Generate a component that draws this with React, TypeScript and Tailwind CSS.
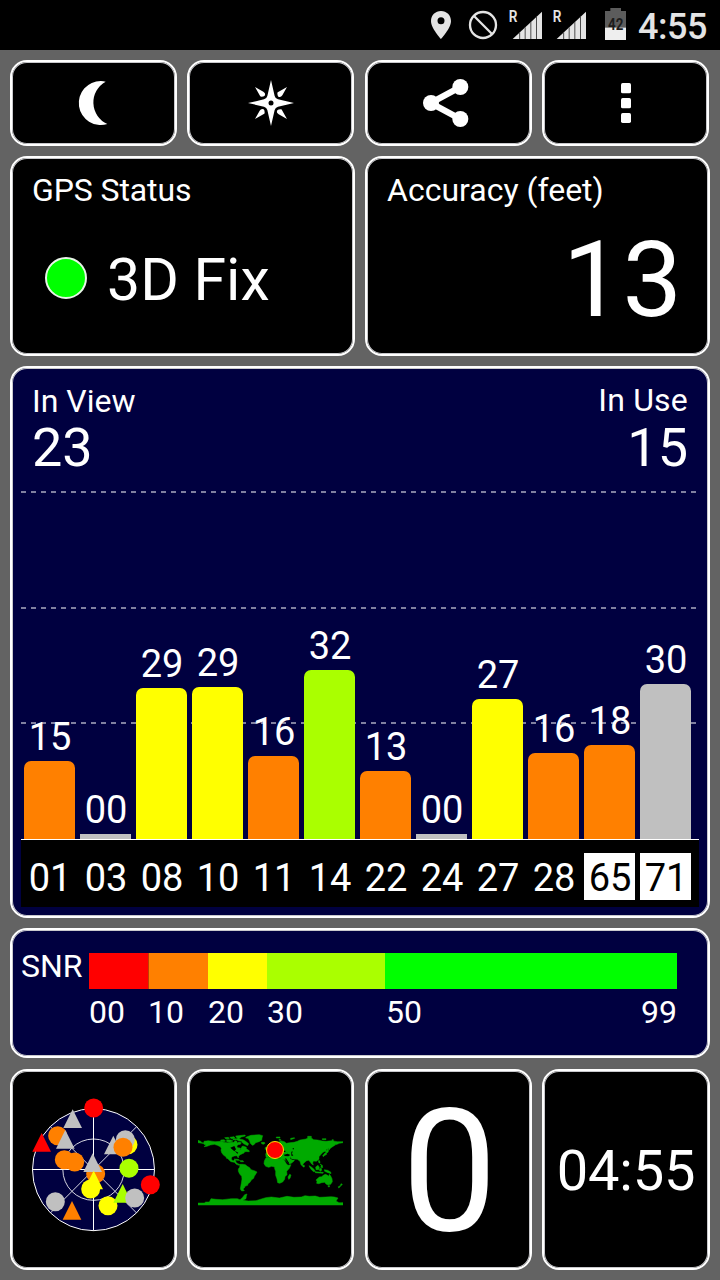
import type { ReactNode } from "react";

const COLORS = {
  red: "#ff0000",
  orange: "#ff8000",
  yellow: "#ffff00",
  lime: "#aaff00",
  gray: "#c0c0c0",
};

type Color = keyof typeof COLORS;

const FILL: Record<Color, string> = {
  red: "bg-[#ff0000]",
  orange: "bg-[#ff8000]",
  yellow: "bg-[#ffff00]",
  lime: "bg-[#aaff00]",
  gray: "bg-[#c0c0c0]",
};

interface Satellite {
  id: string;
  snr: string;
  height: number;
  color: Color;
  glonass?: boolean;
}

const SATELLITES: Satellite[] = [
  { id: "01", snr: "15", height: 78, color: "orange" },
  { id: "03", snr: "00", height: 5, color: "gray" },
  { id: "08", snr: "29", height: 151, color: "yellow" },
  { id: "10", snr: "29", height: 152, color: "yellow" },
  { id: "11", snr: "16", height: 83, color: "orange" },
  { id: "14", snr: "32", height: 169, color: "lime" },
  { id: "22", snr: "13", height: 68, color: "orange" },
  { id: "24", snr: "00", height: 5, color: "gray" },
  { id: "27", snr: "27", height: 140, color: "yellow" },
  { id: "28", snr: "16", height: 86, color: "orange" },
  { id: "65", snr: "18", height: 94, color: "orange", glonass: true },
  { id: "71", snr: "30", height: 155, color: "gray", glonass: true },
];

function Card({ className, children }: { className: string; children: ReactNode }) {
  return (
    <div
      className={`shrink-0 rounded-[17px] border-2 border-white shadow-[inset_0_0_0_1px_#c8c8cc] ${className}`}
    >
      {children}
    </div>
  );
}

function Signal() {
  return (
    <svg className="h-8 w-[35px] overflow-visible" viewBox="264 27 105 96">
      <text x="266" y="67" fill="#e4e4e4" fontFamily="Roboto" fontWeight="600" fontSize="50" textLength="26" lengthAdjust="spacingAndGlyphs">
        R
      </text>
      <path d="M278 117 366 35V117Z" fill="#e4e4e4" />
      <path d="M299 97V117M315.500 82V117M332.500 66V117M349.500 50V117" stroke="#4c4c4c" strokeWidth="3" />
    </svg>
  );
}

function StatusBar() {
  return (
    <header className="flex h-[50px] shrink-0 items-center bg-black pl-[430px] text-[#e4e4e4]">
      <svg className="h-[30px] w-[22px]" viewBox="30 30 66 90">
        <path
          fillRule="evenodd"
          fill="#e4e4e4"
          d="M63 33C46 33 33 46 33 63C33 85 63 117 63 117S93 85 93 63C93 46 80 33 63 33ZM63 52A10.500 10.500 0 1 1 63 73A10.500 10.500 0 1 1 63 52Z"
        />
      </svg>
      <svg className="ml-4 h-[30px] w-[30px]" viewBox="144 30 90 90">
        <circle cx="189" cy="75" r="39" fill="none" stroke="#e4e4e4" strokeWidth="7" />
        <path d="M162 48 216 102" stroke="#e4e4e4" strokeWidth="7" />
      </svg>
      <div className="ml-2.5 flex gap-[9px]">
        <Signal />
        <Signal />
      </div>
      <svg className="ml-[17px] h-[34px] w-[23px]" viewBox="552 24 69 102">
        <path d="M571 24H603V33H618V84H555V33H571Z" fill="#5c5c5c" />
        <path d="M555 83H618V120H555Z" fill="#eeeeee" />
        <text x="564" y="90" fill="#1c1c1c" fontFamily="Roboto" fontWeight="700" fontSize="48" textLength="46" lengthAdjust="spacingAndGlyphs">
          42
        </text>
      </svg>
      <span className="ml-[11px] pt-1 text-[36px] leading-none font-medium tracking-[-0.5px]">4:55</span>
    </header>
  );
}

function Toolbar() {
  const button = "h-[86px] w-[167px] bg-black";
  return (
    <div className="flex">
      <Card className={button}>
        <svg className="h-full w-full" viewBox="36 36 489 246">
          <path d="M317 95Q310 93 303 93A66 66 0 1 0 322 222A71 71 0 0 1 317 95Z" fill="#fff" />
        </svg>
      </Card>
      <Card className={`ml-2.5 ${button}`}>
        <svg className="h-full w-full" viewBox="567 36 489 246">
          <path
            d="M813 90 824 138Q826 146 834 148L882 159 834 170Q826 172 824 180L813 228 802 180Q800 172 792 170L744 159 792 148Q800 146 802 138Z"
            fill="#fff"
          />
          {[0, 90, 180, 270].map((angle) => (
            <path
              key={angle}
              transform={`rotate(${angle} 813 159)`}
              d="M765 111 790 125Q798 130 794 137Q791 140 784 140Q780 140 779 136Z"
              fill="#fff"
            />
          ))}
          <circle cx="813" cy="159" r="7.500" fill="#000" />
        </svg>
      </Card>
      <Card className={`ml-[11px] ${button}`}>
        <svg className="h-full w-full" viewBox="21 36 489 246">
          <path d="M301 111 212 159 301 207" fill="none" stroke="#fff" strokeWidth="19" />
          <circle cx="213" cy="159" r="24" fill="#fff" />
          <circle cx="301" cy="111" r="24" fill="#fff" />
          <circle cx="301" cy="207" r="24" fill="#fff" />
        </svg>
      </Card>
      <Card className={`ml-2.5 ${button}`}>
        <svg className="h-full w-full" viewBox="552 36 489 246" fill="#fff">
          <rect x="783" y="99" width="30" height="31" rx="5" />
          <rect x="783" y="144" width="30" height="31" rx="5" />
          <rect x="783" y="189" width="30" height="30" rx="5" />
        </svg>
      </Card>
    </div>
  );
}

function StatusCards() {
  return (
    <div className="mt-2.5 flex gap-2.5">
      <Card className="h-[200px] w-[345px] bg-black pt-4 pl-5">
        <div className="text-[32px] leading-none tracking-[-0.1px]">GPS Status</div>
        <div className="mt-[40px] flex items-center pl-[13px]">
          <div className="h-[42px] w-[42px] rounded-full border-2 border-[#e8f4e8] bg-[#00ff00]" />
          <span className="ml-5 pt-1 text-[59px] leading-none">3D Fix</span>
        </div>
      </Card>
      <Card className="h-[200px] w-[345px] bg-black pt-4 pr-[26px] pl-5">
        <div className="text-[32px] leading-none">Accuracy (feet)</div>
        <div className="mt-[21px] text-right text-[106px] leading-none">13</div>
      </Card>
    </div>
  );
}

function GridLine({ className }: { className: string }) {
  return (
    <div
      className={`h-0.5 w-[676px] bg-[repeating-linear-gradient(to_right,#8080a0_0_5px,transparent_5px_10px)] ${className}`}
    />
  );
}

function SatelliteChart() {
  return (
    <Card className="mt-2.5 h-[552px] w-[700px] bg-[#000040] px-[9px]">
      <div className="flex h-[123px] justify-between px-[11px]">
        <div className="pt-[17px]">
          <div className="text-[32px] leading-none">In View</div>
          <div className="mt-[4px] text-[54px] leading-none">23</div>
        </div>
        <div className="pt-4 text-right">
          <div className="text-[32px] leading-none tracking-[0.2px]">In Use</div>
          <div className="mt-[5px] text-[54px] leading-none">15</div>
        </div>
      </div>
      <div className="relative h-[348px]">
        <div className="absolute inset-0">
          <GridLine className="" />
          <GridLine className="mt-[114px]" />
          <GridLine className="mt-[113px]" />
        </div>
        <div className="relative flex h-full gap-[5px] pl-[3px]">
          {SATELLITES.map((s) => (
            <div key={s.id} className="flex w-[51px] shrink-0 flex-col justify-end">
              <span className="mb-[5px] pl-px text-center text-[38px] leading-none">{s.snr}</span>
              <div
                className={`${s.height > 10 ? "rounded-t-[7px]" : ""} ${FILL[s.color]}`}
                style={{ height: s.height }}
              />
            </div>
          ))}
        </div>
      </div>
      <div className="flex h-[68px] w-[678px] gap-[5px] border-t border-white bg-black pt-[13px] pl-[3px]">
        {SATELLITES.map((s) => (
          <div
            key={s.id}
            className={`h-[47px] w-[51px] shrink-0 pt-1.5 pl-px text-center text-[38px] leading-none ${
              s.glonass ? "bg-white text-black" : ""
            }`}
          >
            {s.id}
          </div>
        ))}
      </div>
    </Card>
  );
}

function SnrScale() {
  const label = "mt-[7px] text-[32px] leading-none";
  return (
    <Card className="mt-2.5 flex h-[130px] w-[700px] bg-[#000040] pt-[23px] pl-[9px]">
      <div className="w-[68px] shrink-0 text-[32px] leading-none">
        <div className="-mt-[3px]">SNR</div>
      </div>
      <div className="flex">
        <div className="w-[59px]">
          <div className="h-9 bg-[#ff0000]" />
          <div className={label}>00</div>
        </div>
        <div className="w-[60px]">
          <div className="h-9 border-l border-[#bf4000] bg-[#ff8000]" />
          <div className={label}>10</div>
        </div>
        <div className="w-[59px]">
          <div className="h-9 bg-[#ffff00]" />
          <div className={label}>20</div>
        </div>
        <div className="w-[118px]">
          <div className="h-9 bg-[#aaff00]" />
          <div className={label}>30</div>
        </div>
        <div className="w-[292px]">
          <div className="mr-[0.500px] h-9 bg-[#00ff00]" />
          <div className={`flex justify-between pl-px ${label}`}>
            <span>50</span>
            <span>99</span>
          </div>
        </div>
      </div>
    </Card>
  );
}

type Marker = ["dot" | "tri", number, number, Color];

/* Triangles are positioned by their apex, dots by their centre. */
const MARKERS: Marker[] = [
  ["dot", 251, 114, "red"],
  ["tri", 188, 118, "gray"],
  ["dot", 143, 197, "orange"],
  ["tri", 95, 189, "red"],
  ["tri", 166, 180, "gray"],
  ["dot", 354, 224, "yellow"],
  ["tri", 310, 197, "gray"],
  ["dot", 346, 209, "gray"],
  ["dot", 339, 232, "orange"],
  ["dot", 163, 269, "orange"],
  ["dot", 194, 276, "orange"],
  ["dot", 257, 311, "orange"],
  ["tri", 248, 250, "gray"],
  ["tri", 251, 302, "yellow"],
  ["dot", 242, 357, "yellow"],
  ["dot", 357, 295, "lime"],
  ["dot", 421, 344, "red"],
  ["dot", 136, 395, "gray"],
  ["tri", 186, 393, "orange"],
  ["dot", 294, 407, "yellow"],
  ["tri", 338, 342, "lime"],
  ["dot", 374, 384, "gray"],
];

function SkyPlot() {
  return (
    <svg className="mt-[26px] ml-[18px] h-[137px] w-[132px]" viewBox="60 81 396 411">
      <circle cx="250.500" cy="299" r="183" fill="#000040" stroke="#fff" strokeWidth="3" />
      <circle cx="250.500" cy="299" r="92" fill="none" stroke="#fff" strokeWidth="2.500" />
      <path d="M250.500 116V482M67 298.500H433" stroke="#fff" strokeWidth="3" />
      <path d="M121 170 380 429M380 170 121 429" stroke="#fff" strokeWidth="2.500" />
      {MARKERS.map(([kind, x, y, color], i) =>
        kind === "dot" ? (
          <circle key={i} cx={x} cy={y} r="28.500" fill={COLORS[color]} />
        ) : (
          <path key={i} d={`M${x} ${y}l28 56h-56z`} fill={COLORS[color]} />
        ),
      )}
    </svg>
  );
}

const LAND = [
  "M39 61L47 64 51 68 57 68 57 64 70 62 90 65 108 64 116 67 127 68 138 67 147 67 150 62 156 64 156 69 162 66 169 68 166 73 160 74 155 78 158 83 165 84 165 90 169 88 170 81 173 78 180 80 184 82 184 86 191 91 184 95 179 95 177 99 172 101 166 104 161 108 160 114 155 107 148 108 142 110 139 114 140 120 145 122 150 118 152 123 154 128 159 131 165 134 162 136 154 133 148 127 138 125 133 121 126 113 127 117 121 109 116 106 110 98 108 91 109 85 106 80 97 76 88 73 76 75 66 79 57 80 63 75 57 73 57 71 51 70 39 68Z",
  "M107 60L117 59 122 63 117 65 108 64ZM119 53L130 52 133 56 122 56ZM134 52L147 50 150 54 139 56ZM125 59L137 60 144 63 135 66 125 65ZM143 56L155 56 160 53 164 57 174 59 182 64 191 71 188 77 179 73 173 69 170 64 160 62 155 59 145 60ZM152 48L180 45 181 48 169 51 164 55 155 53Z",
  "M184 51L198 46 223 44 233 47 231 54 230 61 222 65 212 68 207 74 202 76 196 70 194 63 189 55 182 54ZM229 67L238 67 240 70 235 73 230 71ZM166 85H173V88H166ZM186 92L192 91 193 95 187 95Z",
  "M148 117L159 118 164 121 155 121ZM165 122L174 122 176 125 167 125Z",
  "M165 133L173 133 181 134 187 139 194 143 198 149 208 152 216 156 213 161 208 169 206 175 199 180 195 187 189 191 188 196 180 199 178 204 174 207 178 212 170 213 166 207 167 200 169 190 171 177 170 169 164 162 160 154 160 147 164 142Z",
  "M243 111L242 101 248 96 254 100 258 94 253 91 263 86 267 79 275 77 277 70 288 62 298 65 304 70 314 68 327 67 337 64 345 60 363 57 370 53 379 54 386 59 398 60 412 63 423 64 440 62 457 65 474 65 474 68 463 70 456 73 446 76 436 77 431 84 423 89 427 95 425 99 420 94 414 97 407 104 402 110 402 118 394 124 385 123 383 129 385 135 379 131 376 126 371 121 365 122 360 126 354 132 353 139 348 134 345 124 337 118 326 117 328 122 320 129 313 132 306 124 300 119 293 118 287 116 277 114 268 111 260 108 255 112 246 112Z",
  "M243 113L256 112 268 110 272 115 280 117 291 116 298 121 304 131 309 136 318 134 313 145 305 154 306 164 300 170 299 178 293 186 284 190 278 188 276 177 272 166 272 154 269 146 269 141 260 139 251 142 242 139 237 131 238 123ZM314 163L318 165 315 175 311 178 309 171Z",
  "M247 75L252 78 256 88 249 90 250 84ZM241 82H246V88H240Z",
  "M274 51H285V54H274ZM282 58H287V61H282ZM317 55L328 53 329 55 317 59ZM368 49H379V53H368ZM412 56H423V59H412ZM441 59H445V62H441Z",
  "M419 100L424 97 425 103 418 107 415 110 413 107ZM428 84L431 92 428 98 425 96ZM400 122L404 122 405 129 402 129ZM405 132L412 136 413 143 407 142 409 137ZM372 137L379 141 387 148 391 154 386 155 380 150 375 143ZM392 141L399 136 403 142 401 149 393 149ZM404 146L409 145 410 151 406 154 403 151ZM390 155L402 156 415 157 414 160 391 158ZM418 149L428 151 437 156 438 161 429 158 424 156 419 154ZM434 71L440 74 444 72 449 76 443 80 437 84 432 90 430 83ZM354 136H358V141H354Z",
  "M397 176L403 171 410 170 415 166 421 163 428 166 431 169 433 163 437 168 441 176 442 185 437 193 429 195 423 192 419 187 410 188 401 191 395 190 396 184 393 180ZM429 197L434 197 433 201 430 201ZM468 191L472 193 470 196 466 197ZM460 200L466 197 466 200 461 204Z",
  "M39 249H58L62 246H73L78 236 93 238 113 239 139 236 157 236 165 239 172 233 179 224 186 222 184 228 183 236 173 241 190 243 213 242 229 237 242 233 259 231 283 234 306 229 327 232 349 231 360 227 373 229 391 228 404 232 422 231 438 230 448 231 459 234 453 243 462 248H474V255H39Z",
];

function WorldMap() {
  return (
    <svg className="mt-[63px] ml-[9px] h-[72px] w-[145px]" viewBox="39 42 435 216">
      <g fill="#00aa00" stroke="#00aa00" strokeWidth="1.500">
        {LAND.map((d, i) => (
          <path key={i} d={d} />
        ))}
      </g>
      <path
        d="M136 83L148 78 153 88 148 94 141 88ZM149 92L160 98 157 101ZM297 104L308 101 316 105 310 109 299 108ZM319 95L323 94 321 101 325 107 319 107ZM300 116L303 115 313 130 311 132ZM315 111L320 117 327 117 325 120 317 117ZM271 109L279 109 285 113 278 114ZM323 85H327V88H323ZM297 92H301V96H297Z"
        fill="#000"
      />
      <circle cx="270" cy="90" r="25.500" fill="#ff0000" stroke="#ffe000" strokeWidth="3" />
    </svg>
  );
}

function BottomCards() {
  return (
    <div className="mt-[11px] flex">
      <Card className="h-[201px] w-[167px] bg-black">
        <SkyPlot />
      </Card>
      <Card className="ml-2.5 h-[201px] w-[167px] bg-black">
        <WorldMap />
      </Card>
      <Card className="ml-[11px] h-[201px] w-[167px] bg-black pt-4 pl-0.5 text-center text-[170px] leading-none">
        0
      </Card>
      <Card className="ml-2.5 flex h-[201px] w-[168px] items-center justify-center bg-black pt-0.5 text-[56px] leading-none tracking-[-0.2px]">
        04:55
      </Card>
    </div>
  );
}

export default function App() {
  return (
    <div className="flex h-[1280px] w-[720px] flex-col overflow-hidden bg-[#636363] font-['Roboto',sans-serif] text-white">
      <StatusBar />
      <main className="px-2.5 pt-2.5">
        <Toolbar />
        <StatusCards />
        <SatelliteChart />
        <SnrScale />
        <BottomCards />
      </main>
    </div>
  );
}
